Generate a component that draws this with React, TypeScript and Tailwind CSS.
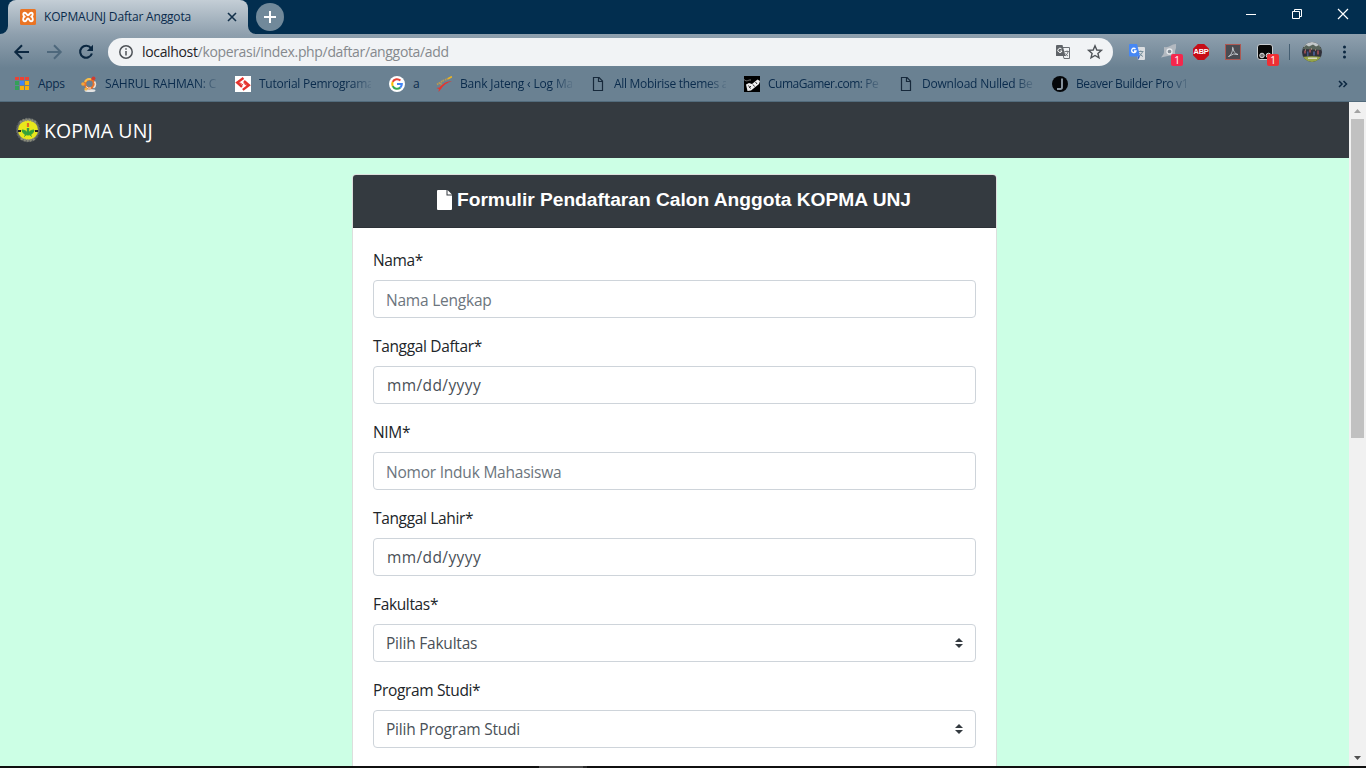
import type { ReactNode } from "react";

const UI = "font-['Open_Sans','Noto_Sans',sans-serif]";

function XamppIcon() {
  return (
    <svg width="16" height="16" viewBox="0 0 16 16" className="shrink-0">
      <rect width="16" height="16" rx="1.5" fill="#ea7423" />
      <path
        d="M4.800 3.700C2.800 3.700 2.800 7 4.800 7.600 2.600 8.200 2.600 12.300 5 12.300 6.800 12.300 6.500 9.500 8 9.500s1.200 2.800 3 2.800c2.400 0 2.400-4.100.2-4.700 2-.6 2-3.900 0-3.900C9.400 3.700 9.500 6.300 8 6.300S6.600 3.700 4.800 3.700Z"
        fill="none"
        stroke="#fff"
        strokeWidth="1.900"
        strokeLinejoin="round"
      />
    </svg>
  );
}

function AppsIcon() {
  const colors = ["#ea4335", "#ea4335", "#ea4335", "#34a05a", "#4285f4", "#f9b208", "#34a05a", "#f9b208", "#f9b208"];
  return (
    <svg width="16" height="16" viewBox="0 0 16 16" shapeRendering="crispEdges">
      {colors.map((c, i) => (
        <rect key={i} x={1 + (i % 3) * 5} y={[1, 5, 10][Math.floor(i / 3)]} width="4" height={i < 3 ? 3 : 4} fill={c} />
      ))}
    </svg>
  );
}

function SahrulIcon() {
  return (
    <svg width="16" height="16" viewBox="0 0 16 16">
      <ellipse cx="9" cy="14.500" rx="5.500" ry="1.500" fill="#e3e3e3" />
      <circle cx="8.500" cy="7.800" r="4.400" fill="none" stroke="#e9722c" strokeWidth="2.400" />
      <path d="M4 6A5 5 0 0 1 10 3.300" fill="none" stroke="#f8c04a" strokeWidth="2" />
      <path d="M13.500 5.500a5 5 0 0 1-1 6.500" fill="none" stroke="#f3e0cf" strokeWidth="1.500" />
      <path d="M5 10.500q2 2.500 5 1.500" fill="none" stroke="#f4ead8" strokeWidth="1" />
      <circle cx="2" cy="8" r="1.800" fill="#f4a43b" />
      <circle cx="12.500" cy="2.300" r="1.900" fill="#cf3d32" />
      <circle cx="5" cy="13" r="1.600" fill="#f6b23c" />
    </svg>
  );
}

function TutorialIcon() {
  return (
    <svg width="16" height="16" viewBox="0 0 16 16">
      <rect width="16" height="16" fill="#fff" />
      <path d="M8.500 2 2.200 6.500 7 10.800M7.800 13.900 13.900 9.300 9 5" fill="none" stroke="#e5322d" strokeWidth="2.400" />
      <path d="M4.500 6.500 8 9M8.500 7l3.200 2.600" stroke="#e5322d" strokeWidth="1" />
    </svg>
  );
}

function GoogleIcon() {
  return (
    <svg width="16" height="16" viewBox="0 0 16 16">
      <circle cx="8" cy="8" r="8" fill="#fff" />
      <g fill="none" strokeWidth="2.100">
        <path d="M11.400 4.600A4.800 4.800 0 0 0 3.700 5.900" stroke="#ea4335" />
        <path d="M3.700 5.900a4.800 4.800 0 0 0 0 4.200" stroke="#fbbc05" />
        <path d="M3.700 10.100a4.800 4.800 0 0 0 7.500 1.500" stroke="#34a853" />
        <path d="M11.200 11.600A4.800 4.800 0 0 0 12.800 8H8" stroke="#4285f4" />
      </g>
    </svg>
  );
}

function BankIcon() {
  return (
    <svg width="16" height="16" viewBox="0 0 16 16">
      <path d="M.5 12 3.500 11.500C6 8.500 10 5.200 16 5 11 6.500 7 9.500 5 13L2.500 16 3 13Z" fill="#e8322c" />
      <path d="M1 8.500 4 6.500 5.500 9M5 6 8 4M9 4 12 2.500" fill="none" stroke="#b99a50" strokeWidth="1.800" strokeDasharray="1.500 .5" />
      <path d="M12 2.800 16 .5" fill="none" stroke="#edb520" strokeWidth="1.600" />
    </svg>
  );
}

function FileOutline() {
  return (
    <svg width="16" height="16" viewBox="0 0 16 16">
      <path d="M3.500 1.500h5.600l3.400 3.500v9.500h-9ZM8.500 1.500v4h4" fill="none" stroke="#17293b" strokeWidth="1.200" />
    </svg>
  );
}

function CumaIcon() {
  return (
    <svg width="16" height="16" viewBox="0 0 16 16">
      <rect width="16" height="16" fill="#000" />
      <path d="M0 3.500c3 3 4 0 7 .5" stroke="#777" fill="none" />
      <path d="M2 8.500 5 7l3 1 5.500-4.500L16 5l-1 3-8 6.500L3.500 15Z" fill="#eee" />
      <path d="m4.500 9.500 2 3M5 12l2-2M9 8.500l1.500 2M11.500 6l1.500 2" stroke="#333" />
    </svg>
  );
}

function JIcon() {
  return (
    <svg width="16" height="16" viewBox="0 0 16 16">
      <circle cx="8" cy="8" r="8" fill="#05070a" />
      <path d="M10 2.500v8.700q0 1.800-1.800 1.800H5" fill="none" stroke="#8b98a3" strokeWidth="1.900" />
    </svg>
  );
}

type BookmarkProps = { icon: ReactNode; label: string; fade?: boolean; width: string; tracking: string };

function Bookmark({ icon, label, fade, width, tracking }: BookmarkProps) {
  return (
    <div className="flex shrink-0 items-center gap-2">
      {icon}
      <span
        className={`${width} ${tracking} whitespace-nowrap text-[12px] leading-4 text-[#0a2b4c] ${
          fade ? "[mask-image:linear-gradient(to_right,black_82%,transparent_103%)]" : ""
        }`}
      >
        {label}
      </span>
    </div>
  );
}

function TabStrip() {
  return (
    <div className="flex h-[34px] shrink-0 items-start bg-[#022e4f]">
      <div className="flex w-2 items-end self-stretch">
        <svg width="8" height="8" viewBox="0 0 8 8">
          <path d="M8 0v8H0a8 8 0 0 0 8-8Z" fill="#92a3b0" />
        </svg>
      </div>
      <div className="flex h-[34px] w-60 items-center rounded-t-lg bg-linear-to-b from-[#c4ced6] to-[#8fa0ae] pl-3">
        <XamppIcon />
        <span className="ml-2 w-[182px] whitespace-nowrap text-[12px] leading-4 tracking-[-0.17px] text-[#0a2b4c]">
          KOPMAUNJ Daftar Anggota
        </span>
        <svg width="12" height="12" viewBox="0 0 12 12">
          <path d="m2 2 8 8m0-8-8 8" stroke="#12304a" strokeWidth="1.600" />
        </svg>
      </div>
      <div className="flex w-2 items-end self-stretch">
        <svg width="8" height="8" viewBox="0 0 8 8">
          <path d="M0 0v8h8a8 8 0 0 1-8-8Z" fill="#92a3b0" />
        </svg>
      </div>
      <div className="mt-[3px] flex size-7 items-center justify-center rounded-full bg-[#71899a]">
        <svg width="14" height="14" viewBox="0 0 14 14">
          <path d="M7 1v12M1 7h12" stroke="#fff" strokeWidth="2" />
        </svg>
      </div>
      <div className="ml-auto flex items-center gap-[34px] pt-2 pr-[17px]">
        <svg width="12" height="12" viewBox="0 0 12 12">
          <path d="M1 6.500h10" stroke="#fff" />
        </svg>
        <svg width="12" height="12" viewBox="0 0 12 12">
          <path d="M1.500 3.500h7v7h-7ZM3.500 3.500v-2h7v7h-2" fill="none" stroke="#fff" />
        </svg>
        <svg width="12" height="12" viewBox="0 0 12 12">
          <path d="m1 1 10 10m0-10L1 11" stroke="#fff" strokeWidth="1.200" />
        </svg>
      </div>
    </div>
  );
}

function Badge({ className }: { className: string }) {
  return (
    <span
      className={`absolute top-[10px] left-[10px] flex h-3 w-3 items-center justify-center rounded-[2px] text-[10px] leading-3 text-white ${className}`}
    >
      1
    </span>
  );
}

function Extensions() {
  return (
    <div className="flex items-center gap-4">
      <svg width="16" height="16" viewBox="0 0 16 16">
        <path d="M6 3h9q1 0 1 1v11q0 1-1 1H9Z" fill="#dbdee1" />
        <path d="M9 7.500h5.500M11.800 6.500v1M13.500 8q-1 3-4 4.500M10.500 9q1 2.500 3.500 3.500" stroke="#78909c" fill="none" />
        <path d="M1 0h7l3 12.500H1q-1 0-1-1V1Q0 0 1 0Z" fill="#4687f4" />
        <path d="m8.500 12.500 2.500 0L9 16Z" fill="#2b59c9" />
        <path d="M6.500 5A2.200 2.200 0 1 0 7 7H5" stroke="#fff" fill="none" strokeWidth="1.300" />
      </svg>
      <div className="relative size-4">
        <svg width="16" height="16" viewBox="0 0 16 16">
          <path d="M3 3q4 .5 6-1 3-2 6-2 .5 4-1 7-.5 2 1 5-3 1-6-.5L0 13.500Q3 10 3 8Z" fill="#b3b9c0" />
          <circle cx="8.500" cy="7.500" r="2.500" fill="#818c96" stroke="#e7eaed" strokeWidth="1.300" />
        </svg>
        <Badge className="bg-[#f5274c]" />
      </div>
      <div className="flex size-4 items-center justify-center bg-[#c70d16] font-['Liberation_Sans',sans-serif] text-[7.500px] leading-none font-bold tracking-[-0.3px] text-white [clip-path:polygon(30%_0,70%_0,100%_30%,100%_70%,70%_100%,30%_100%,0_70%,0_30%)]">
        ABP
      </div>
      <svg width="16" height="16" viewBox="0 0 16 16">
        <rect x=".5" y=".5" width="15" height="15" fill="#4a4b51" stroke="#ad5751" />
        <path d="M3.500 12.500C6 11.500 8 7 7.500 3.500q0-.5.500 0C8 7 10 10 13 10.500q-4-2-9.500 2Z" fill="none" stroke="#c8ced3" strokeWidth=".9" />
      </svg>
      <div className="relative size-4">
        <svg width="16" height="16" viewBox="0 0 16 16">
          <rect x=".5" y=".5" width="15" height="15" rx="2.500" fill="#070707" stroke="#c8cdd1" />
          <circle cx="5" cy="11.500" r="2.300" fill="#777" stroke="#ddd" />
          <circle cx="11.500" cy="11.500" r="2.300" fill="#777" stroke="#ddd" />
        </svg>
        <Badge className="bg-[#ef2f34]" />
      </div>
      <div className="h-4 w-px bg-[#445e72]" />
      <svg width="20" height="20" viewBox="0 0 20 20" className="-ml-1">
        <clipPath id="avatar">
          <circle cx="10" cy="10" r="10" />
        </clipPath>
        <g clipPath="url(#avatar)">
          <rect width="20" height="20" fill="#30303a" />
          <rect width="20" height="5" fill="#c3c8ca" />
          <path d="M0 7 4 3l3 1.500 4-2 3 2 3-1.500 3 5Z" fill="#58645a" />
          <path d="M2 8.500h2v3H2Zm5-1h2v3H7Zm8 1h2v4h-2Z" fill="#8e4a50" />
          <path d="M5 9.500h1.500v5H5Zm6 0h2v4h-2Z" fill="#46598a" />
          <path d="M3 7.500h1v1H3Zm6-1h1v1H9Zm4 1h1v1h-1Z" fill="#d6a68d" />
          <path d="M0 15q10-1.500 20 0V20H0Z" fill="#96a548" />
          <path d="M6 15.500h9V17H6Z" fill="#d5d8bd" />
        </g>
      </svg>
    </div>
  );
}

function Toolbar() {
  return (
    <div className="flex h-9 shrink-0 items-center">
      <svg width="18" height="18" viewBox="0 0 18 18" className="ml-[13px]">
        <path d="M16 9H2.500M9 2.300 2.300 9 9 15.700" fill="none" stroke="#0b2740" strokeWidth="2" />
      </svg>
      <svg width="18" height="18" viewBox="0 0 18 18" className="ml-[14px]">
        <path d="M2 9h13.500M9 2.300 15.700 9 9 15.700" fill="none" stroke="#4e687c" strokeWidth="2" />
      </svg>
      <svg width="18" height="18" viewBox="0 0 18 18" className="ml-[14px]">
        <path d="M14 5.200A6 6 0 1 0 14.900 10.500" fill="none" stroke="#0b2740" strokeWidth="2.100" />
        <path d="M16 1.800V8H9.800Z" fill="#0b2740" />
      </svg>
      <div className="ml-[13px] flex h-7 w-[1005px] items-center rounded-full bg-[#f1f3f5] pr-[9px] pl-[11px]">
        <svg width="14" height="14" viewBox="0 0 14 14">
          <circle cx="7" cy="7" r="6.200" fill="none" stroke="#4f5358" strokeWidth="1.500" />
          <path d="M7 6v4.500M7 3.300v1.500" stroke="#4f5358" strokeWidth="1.500" />
        </svg>
        <span className="ml-[9px] text-[14px] leading-5 tracking-[-0.34px] whitespace-nowrap text-[#85898d]">
          <span className="text-[#1f2225]">localhost</span>/koperasi/index.php/daftar/anggota/add
        </span>
        <svg width="16" height="16" viewBox="0 0 16 16" className="ml-auto">
          <path d="M7 3.500h7.500v11H9L6 3" fill="#f1f3f5" stroke="#6b6f74" />
          <path d="M1.500 1H7.500l3 11h-9q-.5 0-.5-.5v-10Z" fill="#5f6368" />
          <path d="M6.600 5A2.100 2.100 0 1 0 7 7H5.200" stroke="#fff" fill="none" />
          <path d="M9.500 7.500h4.500M12 6.500v1M13 8q-.5 2.500-3 4M10.500 9.500q1 2 2.500 2.500" stroke="#6b6f74" fill="none" strokeWidth=".9" />
        </svg>
        <svg width="18" height="18" viewBox="0 0 18 18" className="ml-[15px]">
          <path d="m9 2.800 1.800 4.200 4.600.4-3.500 3 1.100 4.500L9 12.500l-4 2.400 1.100-4.500-3.500-3 4.600-.4Z" fill="none" stroke="#4f5358" strokeWidth="1.400" />
        </svg>
      </div>
      <div className="ml-4">
        <Extensions />
      </div>
      <svg width="4" height="14" viewBox="0 0 4 14" className="ml-[20px]">
        <circle cx="2.500" cy="2" r="1.500" fill="#0b2740" />
        <circle cx="2.500" cy="7" r="1.500" fill="#0b2740" />
        <circle cx="2.500" cy="12" r="1.500" fill="#0b2740" />
      </svg>
    </div>
  );
}

function BookmarksBar() {
  return (
    <div className="flex h-[31px] shrink-0 items-center gap-[18px] pb-[3px] pl-[14px]">
      <Bookmark icon={<AppsIcon />} label="Apps" width="w-[25px]" tracking="tracking-[-0.3px]" />
      <Bookmark icon={<SahrulIcon />} label="SAHRUL RAHMAN: C" fade width="w-[112px]" tracking="tracking-[-0.15px]" />
      <Bookmark icon={<TutorialIcon />} label="Tutorial Pemrograma" fade width="w-[112px]" tracking="tracking-[-0.25px]" />
      <Bookmark icon={<GoogleIcon />} label="a" width="w-[5px]" tracking="tracking-normal" />
      <Bookmark icon={<BankIcon />} label="Bank Jateng ‹ Log Ma" fade width="w-[112px]" tracking="tracking-[-0.17px]" />
      <Bookmark icon={<FileOutline />} label="All Mobirise themes a" fade width="w-[112px]" tracking="tracking-[-0.3px]" />
      <Bookmark icon={<CumaIcon />} label="CumaGamer.com: Pe" fade width="w-[112px]" tracking="tracking-[-0.48px]" />
      <Bookmark icon={<FileOutline />} label="Download Nulled Be" fade width="w-[112px]" tracking="tracking-[-0.2px]" />
      <Bookmark icon={<JIcon />} label="Beaver Builder Pro v1" fade width="w-[112px]" tracking="tracking-[-0.4px]" />
      <svg width="10" height="8" viewBox="0 0 10 8" className="mr-[18px] ml-auto">
        <path d="m1 1 3 3-3 3M5.500 1l3 3-3 3" fill="none" stroke="#0b2740" strokeWidth="1.500" />
      </svg>
    </div>
  );
}

function KopmaLogo() {
  return (
    <svg width="24" height="26" viewBox="0 0 24 26">
      <circle cx="12" cy="13" r="11.500" fill="#6d716c" stroke="#555a5e" strokeWidth="1.500" strokeDasharray="2 1" />
      <circle cx="12" cy="13" r="10" fill="#e9e71c" />
      <path d="M4 5.500Q12 0 20 5.500M5 21.500q7 4 14 0" fill="none" stroke="#8b8d7c" strokeWidth="2.500" strokeDasharray="2 1" />
      <path d="M12 11v6" stroke="#35a13a" strokeWidth="2.400" />
      <path d="M12 18q-5 0-6-5 5 0 6 5q1-5 6-5-1 5-6 5M8 19.500l2-1.500M16 19.500 14 18" fill="#35a13a" stroke="#35a13a" />
      <path d="M12 6v4" stroke="#df6b25" strokeWidth="2.200" />
      <path d="M2 14h3M19 14h3" stroke="#222" strokeWidth="1.800" />
    </svg>
  );
}

function Field({ label, children }: { label: string; children: ReactNode }) {
  return (
    <div className="flex h-[86px] flex-col">
      <span className="h-8 text-[15.500px] leading-6 tracking-[-0.35px] text-[#212529]">{label}</span>
      <div className="flex h-[38px] items-center justify-between rounded-[4px] border border-[#ced4da] bg-white px-3 text-[15.500px] leading-6 tracking-[-0.22px]">
        {children}
      </div>
    </div>
  );
}

function SelectArrows() {
  return (
    <svg width="8" height="10" viewBox="0 0 4 5">
      <path fill="#343a40" d="M2 0 0 2h4ZM2 5 0 3h4Z" />
    </svg>
  );
}

function FormCard() {
  return (
    <div className="mt-4 ml-[352px] w-[645px] rounded-[4px] border border-[#dcdfdd] bg-white">
      <div className="flex h-[53px] items-start justify-center gap-[5px] rounded-t-[3px] border-b border-[#2c3137] bg-[#343a40] pt-[15px] pr-px">
        <svg width="15" height="20" viewBox="0 0 15 20">
          <path d="M1 0h8.500v5.500H15V19q0 1-1 1H1q-1 0-1-1V1Q0 0 1 0ZM10.500 0 15 4.500h-4.500Z" fill="#fff" />
        </svg>
        <span className="font-['Liberation_Sans',Arial,sans-serif] text-[19.200px] leading-5 font-bold tracking-[-0.02px] whitespace-nowrap text-white">
          Formulir Pendaftaran Calon Anggota KOPMA UNJ
        </span>
      </div>
      <div className="p-5">
        <Field label="Nama*">
          <span className="pt-px text-[#6c757d]">Nama Lengkap</span>
        </Field>
        <Field label="Tanggal Daftar*">
          <span className="pl-px tracking-[0.4px] text-[#495057]">mm/dd/yyyy</span>
        </Field>
        <Field label="NIM*">
          <span className="pt-px text-[#6c757d]">Nomor Induk Mahasiswa</span>
        </Field>
        <Field label="Tanggal Lahir*">
          <span className="pl-px tracking-[0.4px] text-[#495057]">mm/dd/yyyy</span>
        </Field>
        <Field label="Fakultas*">
          <span className="text-[#495057]">Pilih Fakultas</span>
          <SelectArrows />
        </Field>
        <Field label="Program Studi*">
          <span className="text-[#495057]">Pilih Program Studi</span>
          <SelectArrows />
        </Field>
      </div>
    </div>
  );
}

function Scrollbar() {
  return (
    <div className="flex w-[17px] flex-col items-center bg-[#f1f1f1]">
      <div className="flex h-[17px] items-center">
        <svg width="7" height="4" viewBox="0 0 7 4">
          <path d="M3.500 0 7 4H0Z" fill="#a3a3a3" />
        </svg>
      </div>
      <div className="h-[319px] w-[13px] bg-[#c1c1c1]" />
      <div className="mt-auto flex h-[17px] items-center">
        <svg width="7" height="4" viewBox="0 0 7 4">
          <path d="M3.500 4 7 0H0Z" fill="#505050" />
        </svg>
      </div>
    </div>
  );
}

export default function App() {
  return (
    <div className={`flex h-[768px] w-[1366px] flex-col overflow-hidden ${UI}`}>
      <TabStrip />
      <div className="flex h-[68px] shrink-0 flex-col border-b border-[#526b7c] bg-[linear-gradient(to_bottom,#8fa0ae_0px,#6a8192_34px,#6a8192_100%)]">
        <Toolbar />
        <BookmarksBar />
      </div>
      <div className="flex h-[664px] shrink-0">
        <main className="h-full w-[1349px] overflow-hidden bg-[#ccffe5]">
          <div className="flex h-14 items-center gap-1 bg-[#343a40] pl-4">
            <KopmaLogo />
            <span className="mt-0.5 text-[19.500px] leading-[30px] tracking-[0.1px] whitespace-nowrap text-white">
              KOPMA UNJ
            </span>
          </div>
          <FormCard />
        </main>
        <Scrollbar />
      </div>
      <div className="flex h-0.5 shrink-0 bg-[#101010]">
        <div className="ml-[539px] h-0.5 w-11 bg-[#4c4c4c]" />
        <div className="h-0.5 w-1 bg-[#2a2a2a]" />
      </div>
    </div>
  );
}
